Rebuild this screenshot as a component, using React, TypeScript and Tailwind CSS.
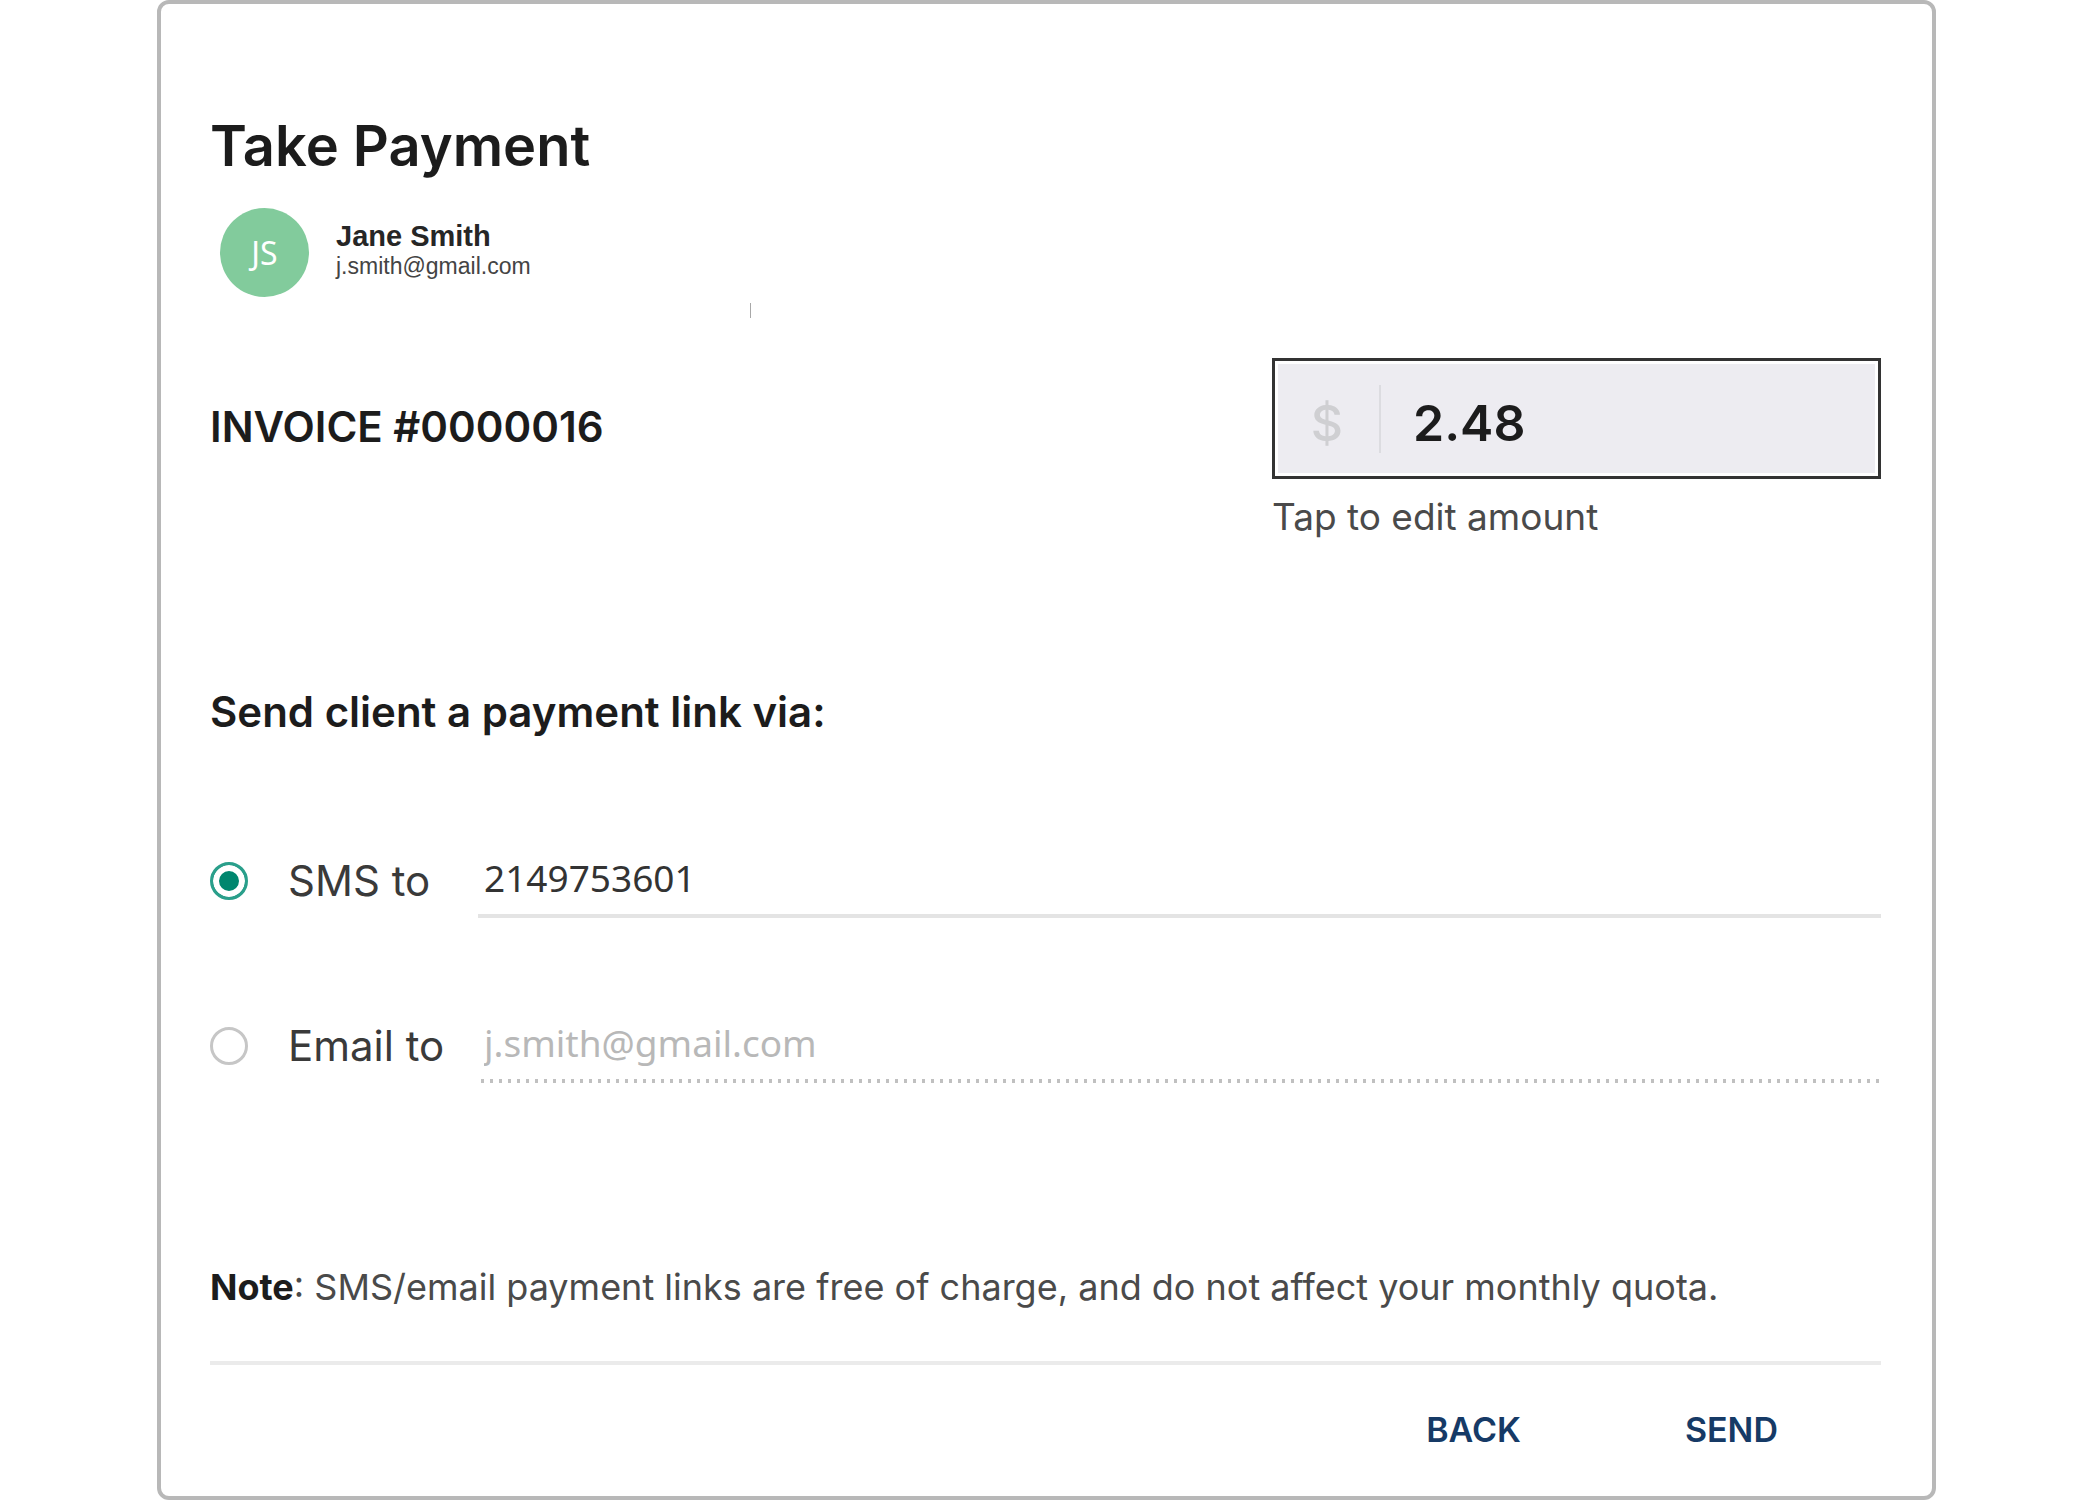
import React from 'react';

type Channel = 'sms' | 'email';

interface ChannelRowProps {
  id: Channel;
  label: string;
  value: string;
  selected: boolean;
  onSelect: (id: Channel) => void;
  onChange: (value: string) => void;
}

const ChannelRow: React.FC<ChannelRowProps> = ({ id, label, value, selected, onSelect, onChange }) => {
  return (
    <div className="flex items-center">
      <input
        type="radio"
        id={`${id}-radio`}
        name="channel"
        checked={selected}
        onChange={() => onSelect(id)}
        className="size-[38px] shrink-0 appearance-none rounded-full border-[3px] border-[#c6c6c6] bg-white checked:border-[#2a9f8b] checked:bg-[#00866e] checked:shadow-[inset_0_0_0_6px_#ffffff]"
      />
      <label htmlFor={`${id}-radio`} className="ml-10 w-[190px] shrink-0 text-[42px] leading-12 text-[#3a3a3a]">
        {label}
      </label>
      <input
        type="text"
        aria-label={label}
        value={value}
        onChange={(e) => onChange(e.target.value)}
        className={`h-[74px] min-w-0 flex-1 pb-2 pl-1.5 font-['Noto_Sans',sans-serif] text-[37px] outline-none ${
          selected
            ? 'bg-[linear-gradient(#e4e4e4,#e4e4e4)] bg-[length:100%_4px] bg-bottom bg-no-repeat text-[#333333]'
            : 'bg-[radial-gradient(circle,#c0c0c0_2px,transparent_2px)] bg-[length:9px_4px] bg-bottom-left bg-repeat-x text-[#b8b8b8]'
        }`}
      />
    </div>
  );
};

export default function App() {
  const [channel, setChannel] = React.useState<Channel>('sms');
  const [amount, setAmount] = React.useState('2.48');
  const [phone, setPhone] = React.useState('2149753601');
  const [email, setEmail] = React.useState('j.smith@gmail.com');

  return (
    <div className="bg-white pl-[157px] pr-[164px] font-['Inter',sans-serif] text-[#1c1c1c]">
      <main className="rounded-xl border-4 border-[#b8b8b8] pt-[110px] pr-[51px] pb-[46px] pl-[49px]">
        <h1 className="text-[56px] leading-[64px] font-semibold">Take Payment</h1>

        {/* Client */}
        <div className="mt-[30px] flex items-center pl-2.5">
          <div className="flex size-[89px] items-center justify-center rounded-full bg-[#82cb9c] font-['Noto_Sans',sans-serif] text-[32px] text-white">
            JS
          </div>
          <div className="ml-[27px] pb-1.5 font-['Liberation_Sans',sans-serif]">
            <div className="text-[29px] leading-8 font-bold text-[#262626]">Jane Smith</div>
            <div className="text-[23px] leading-7 text-[#444444]">j.smith@gmail.com</div>
          </div>
        </div>
        <div className="mt-1.5 ml-[540px] h-[15px] w-px bg-[#a8a8a8]" />

        {/* Invoice and amount */}
        <div className="mt-10 flex items-start justify-between">
          <h2 className="mt-[45px] text-[42px] leading-12 font-semibold">INVOICE #0000016</h2>
          <div className="w-[609px]">
            <div className="flex h-[121px] items-center border-[3px] border-[#333333] bg-[#edecf1] shadow-[inset_0_0_0_3px_#ffffff]">
              <span className="w-[104px] pt-2 text-center text-[50px] leading-[64px] font-medium text-[#cfcfd2]">$</span>
              <span className="h-[68px] w-0.5 bg-[#dcdce0]" />
              <input
                type="text"
                id="amount"
                value={amount}
                onChange={(e) => setAmount(e.target.value)}
                className="ml-8 w-[400px] bg-transparent pt-2 text-[50px] leading-[64px] font-semibold outline-none"
              />
            </div>
            <label htmlFor="amount" className="mt-[18px] block text-[37px] leading-10 text-[#4a4a4a]">
              Tap to edit amount
            </label>
          </div>
        </div>

        <h2 className="mt-[151px] text-[42px] leading-12 font-semibold">Send client a payment link via:</h2>

        {/* Delivery channel */}
        <div className="mt-[108px] flex flex-col gap-[91px]">
          <ChannelRow
            id="sms"
            label="SMS to"
            value={phone}
            selected={channel === 'sms'}
            onSelect={setChannel}
            onChange={setPhone}
          />
          <ChannelRow
            id="email"
            label="Email to"
            value={email}
            selected={channel === 'email'}
            onSelect={setChannel}
            onChange={setEmail}
          />
        </div>

        <p className="mt-[180px] text-[36px] leading-12 text-[#4a4a4a]">
          <strong className="font-bold text-[#1c1c1c]">Note</strong>: SMS/email payment links are free of charge, and do
          not affect your monthly quota.
        </p>

        {/* Actions */}
        <div className="mt-[50px] flex justify-end gap-[164px] border-t-4 border-[#ebebeb] pt-[45px] pr-[103px]">
          <button type="button" className="text-[34px] leading-10 font-semibold text-[#163a66]">
            BACK
          </button>
          <button type="button" className="text-[34px] leading-10 font-semibold text-[#163a66]">
            SEND
          </button>
        </div>
      </main>
    </div>
  );
}
